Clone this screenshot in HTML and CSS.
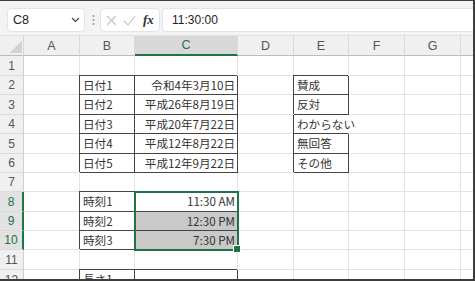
FILE: index.html
```html
<!DOCTYPE html>
<html lang="ja">
<head>
  <meta charset="UTF-8" />
  <title>Excel</title>
  <link rel="stylesheet" href="styles.css">
</head>
<body>
  <div class="window">
    <div class="toolbar">
      <div class="namebox">
        <span>C8</span>
        <svg class="chev" width="9" height="6" viewBox="0 0 9 6"><path d="M1 1l3.5 3.5L8 1" fill="none" stroke="#444" stroke-width="1.2"/></svg>
      </div>
      <svg class="grip" width="3" height="12" viewBox="0 0 3 12"><circle cx="1.5" cy="2" r="1" fill="#999"/><circle cx="1.5" cy="6" r="1" fill="#999"/><circle cx="1.5" cy="10" r="1" fill="#999"/></svg>
      <div class="fxbox">
        <svg width="11" height="11" viewBox="0 0 11 11"><path d="M1 1l9 9M10 1l-9 9" stroke="#c4c4c4" stroke-width="1.1"/></svg>
        <svg width="13" height="11" viewBox="0 0 13 11"><path d="M1 6l4 4 7-9" fill="none" stroke="#c4c4c4" stroke-width="1.1"/></svg>
        <i class="fx">fx</i>
      </div>
      <div class="formula">11:30:00</div>
    </div>

    <div class="sheet">
      <!-- header -->
      <div class="corner"></div>
      <div class="ch">A</div><div class="ch">B</div><div class="ch on">C</div><div class="ch">D</div>
      <div class="ch">E</div><div class="ch">F</div><div class="ch">G</div><div class="ch"></div>

      <div class="rh">1</div><div class="c"></div><div class="c"></div><div class="c"></div><div class="c"></div><div class="c"></div><div class="c"></div><div class="c"></div><div class="c"></div>

      <div class="rh">2</div><div class="c"></div><div class="c k">日付1</div><div class="c k r">令和4年3月10日</div><div class="c"></div><div class="c k">賛成</div><div class="c"></div><div class="c"></div><div class="c"></div>

      <div class="rh">3</div><div class="c"></div><div class="c k">日付2</div><div class="c k r">平成26年8月19日</div><div class="c"></div><div class="c k">反対</div><div class="c"></div><div class="c"></div><div class="c"></div>

      <div class="rh">4</div><div class="c"></div><div class="c k">日付3</div><div class="c k r">平成20年7月22日</div><div class="c"></div><div class="c kl">わからない</div><div class="c"></div><div class="c"></div><div class="c"></div>

      <div class="rh">5</div><div class="c"></div><div class="c k">日付4</div><div class="c k r">平成12年8月22日</div><div class="c"></div><div class="c k">無回答</div><div class="c"></div><div class="c"></div><div class="c"></div>

      <div class="rh">6</div><div class="c"></div><div class="c k">日付5</div><div class="c k r">平成12年9月22日</div><div class="c"></div><div class="c k">その他</div><div class="c"></div><div class="c"></div><div class="c"></div>

      <div class="rh">7</div><div class="c"></div><div class="c"></div><div class="c"></div><div class="c"></div><div class="c"></div><div class="c"></div><div class="c"></div><div class="c"></div>

      <div class="rh on">8</div><div class="c"></div><div class="c k">時刻1</div>
      <div class="c k r active">11:30 AM<div class="sel"></div></div>
      <div class="c"></div><div class="c"></div><div class="c"></div><div class="c"></div><div class="c"></div>

      <div class="rh on">9</div><div class="c"></div><div class="c k">時刻2</div><div class="c k r gray">12:30 PM</div><div class="c"></div><div class="c"></div><div class="c"></div><div class="c"></div><div class="c"></div>

      <div class="rh on">10</div><div class="c"></div><div class="c k">時刻3</div><div class="c k r gray">7:30 PM</div><div class="c"></div><div class="c"></div><div class="c"></div><div class="c"></div><div class="c"></div>

      <div class="rh">11</div><div class="c"></div><div class="c"></div><div class="c"></div><div class="c"></div><div class="c"></div><div class="c"></div><div class="c"></div><div class="c"></div>

      <div class="rh">12</div><div class="c"></div><div class="c k">長さ1</div><div class="c k"></div><div class="c"></div><div class="c"></div><div class="c"></div><div class="c"></div><div class="c"></div>
    </div>
  </div>
</body>
</html>
```

FILE: styles.css
```css
* {
  box-sizing: border-box;
}

body {
  margin: 0;
  font-family: "Noto Sans CJK JP", sans-serif;
  color: #222;
}

.window {
  width: 475px;
  height: 281px;
  overflow: hidden;
  border-top: 1px solid #3c3c3c;
  border-right: 2px solid #3c3c3c;
  border-bottom: 2px solid #3c3c3c;
  background: #fff;
  display: flex;
  flex-direction: column;
}

/* formula bar */
.toolbar {
  height: 35px;
  flex: none;
  background: #f3f3f3;
  display: flex;
  align-items: flex-start;
  padding: 7px 0 0 7px;
  border-bottom: 1px solid #e2e2e2;
}

.namebox {
  width: 78px;
  height: 24px;
  background: #fff;
  border: 1px solid #e4e4e4;
  border-radius: 4px;
  display: flex;
  align-items: center;
  justify-content: space-between;
  padding: 0 4px 0 5px;
  font-family: "Liberation Sans", sans-serif;
  font-size: 12.5px;
}

.grip {
  margin: 6px 5px 0 7px;
}

.fxbox {
  width: 60px;
  height: 24px;
  background: #fff;
  border: 1px solid #e4e4e4;
  border-radius: 4px;
  display: flex;
  align-items: center;
  gap: 6px;
  padding-left: 5px;
  margin-right: 2px;
}

.fx {
  font-family: "Liberation Serif", serif;
  font-weight: bold;
  font-size: 13px;
  color: #333;
  margin-left: 1px;
}

.formula {
  flex: 1;
  height: 24px;
  background: #fff;
  border: 1px solid #e4e4e4;
  border-right: none;
  border-radius: 4px 0 0 4px;
  padding-left: 9px;
  line-height: 22px;
  font-family: "Liberation Sans", sans-serif;
  font-size: 12px;
}

/* grid */
.sheet {
  flex: 1;
  display: grid;
  grid-template-columns: 24px 56px 55px 103px 56px 55px 56px 56px 60px;
  grid-template-rows: 20px 20px 19px 20px 19px 20px 19px 19px 20px 19px 19px 20px 20px;
  font-size: 11.6px;
}

.corner,
.ch,
.rh {
  background: #f0f0f0;
  color: #555;
  font-family: "Liberation Sans", sans-serif;
  font-size: 12.5px;
  display: flex;
  align-items: center;
  justify-content: center;
}

.corner {
  border-right: 1px solid #d6d6d6;
  border-bottom: 1px solid #bdbdbd;
  background: #f0f0f0 linear-gradient(135deg, transparent 55%, #d2d2d2 55%) no-repeat right 1px bottom 2px / 14px 13px;
}

.ch {
  border-right: 1px solid #dadada;
  border-bottom: 1px solid #bdbdbd;
}

.ch.on {
  background: #d8d8d8;
  color: #217346;
  border-bottom: 2px solid #217346;
}

.rh {
  border-right: 1px solid #cfcfcf;
  border-bottom: 1px solid #dadada;
  font-size: 12px;
}

.rh.on {
  background: #e2e2e2;
  color: #217346;
  border-right: 2px solid #217346;
}

.c {
  border-right: 1px solid #e3e3e3;
  border-bottom: 1px solid #e3e3e3;
  padding: 0 3px;
  line-height: 18px;
  white-space: nowrap;
  color: #333;
}

.c.k {
  border-right-color: #444;
  border-bottom-color: #444;
  box-shadow: -1px -1px 0 #444;
}

.c.kl {
  border-right-color: transparent;
  border-bottom-color: #444;
  box-shadow: -1px 0 0 #444;
}

.c.r {
  text-align: right;
  padding-right: 2px;
}

.c.gray {
  background: #c9c9c9;
}

.active {
  position: relative;
}

/* selection frame over C8:C10 */
.sel {
  position: absolute;
  top: -1px;
  left: -1px;
  right: -2px;
  height: 60px;
  border: 2px solid #217346;
  z-index: 2;
}

.sel::after {
  content: "";
  position: absolute;
  right: -4px;
  bottom: -4px;
  width: 6px;
  height: 6px;
  background: #217346;
  border: 1px solid #fff;
}
```
